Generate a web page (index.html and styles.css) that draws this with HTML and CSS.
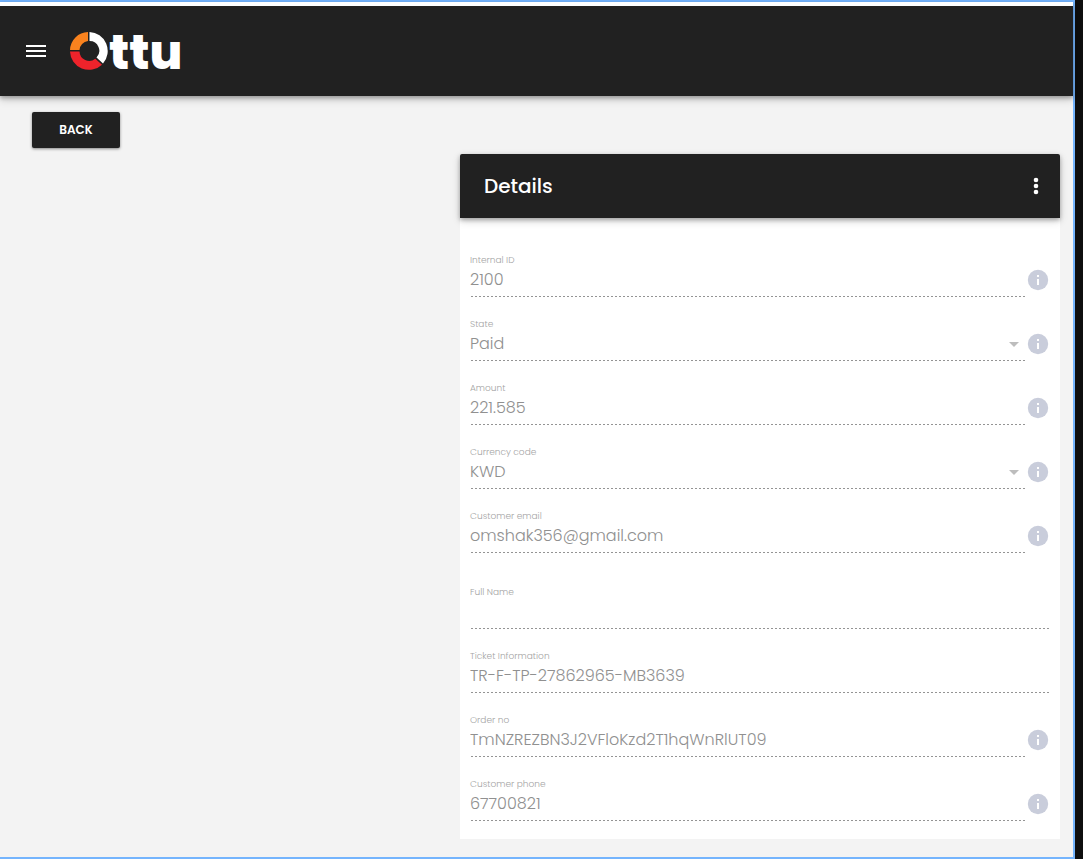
FILE: index.html
```
<!DOCTYPE html>
<html lang="en">
<head>
<meta charset="utf-8">
<meta name="viewport" content="width=device-width, initial-scale=1">
<title>Ottu – Details</title>
<link rel="stylesheet" href="styles.css">
</head>
<body>
<svg class="symbols" aria-hidden="true">
  <symbol id="info" viewBox="0 0 24 24">
    <circle cx="12" cy="12" r="10.2" fill="#c9cddb"/>
    <path d="M11 7h2v2h-2zM11 11h2v6h-2z" fill="#fff"/>
  </symbol>
  <symbol id="caret" viewBox="0 0 10 5"><path d="M0 0h10L5 5z" fill="#bdbdbd"/></symbol>
</svg>
<div class="page">
  <header class="topbar">
    <button class="menu" type="button" aria-label="Menu">
      <svg viewBox="0 0 20 14" width="20" height="14"><path d="M0 1h20v2H0zM0 6h20v2H0zM0 11h20v2H0z" fill="#fff"/></svg>
    </button>
    <a class="logo" href="#" aria-label="Ottu">
      <svg class="ring" viewBox="0 0 38 38" width="38" height="38">
        <path d="M0 18A18.5 18.5 0 0 1 18 0V9A9.5 9.5 0 0 0 9.500 18Z" fill="#f9821e"/>
        <path d="M19.500 0A19 19 0 0 1 33 31.500L26.500 25.500A9.700 9.700 0 0 0 19.500 9Z" fill="#fff"/>
        <path d="M0 19.500H9.500A9.700 9.700 0 0 0 25.300 26.700L32 32.700A19 19 0 0 1 0 19.500Z" fill="#ee232b"/>
      </svg>
      <span class="wordmark">ttu</span>
    </a>
  </header>
  <main class="content">
    <button class="back" type="button">BACK</button>
    <section class="card">
      <div class="card-head">
        <h1 class="card-title">Details</h1>
        <button class="more" type="button" aria-label="More options">
          <svg viewBox="0 0 24 24" width="24" height="24" fill="#fff"><circle cx="12" cy="6" r="2.300"/><circle cx="12" cy="12" r="2.300"/><circle cx="12" cy="18" r="2.300"/></svg>
        </button>
      </div>
      <form class="fields">
        <div class="group">
          <div class="row">
            <div class="field"><label for="id">Internal ID</label><input id="id" value="2100" disabled></div>
            <svg class="info"><use href="#info"/></svg>
          </div>
          <div class="row">
            <div class="field"><label for="state">State</label><select id="state" disabled><option>Paid</option></select><svg class="caret"><use href="#caret"/></svg></div>
            <svg class="info"><use href="#info"/></svg>
          </div>
          <div class="row">
            <div class="field"><label for="amount">Amount</label><input id="amount" value="221.585" disabled></div>
            <svg class="info"><use href="#info"/></svg>
          </div>
          <div class="row">
            <div class="field"><label for="currency">Currency code</label><select id="currency" disabled><option>KWD</option></select><svg class="caret"><use href="#caret"/></svg></div>
            <svg class="info"><use href="#info"/></svg>
          </div>
          <div class="row">
            <div class="field"><label for="email">Customer email</label><input id="email" value="omshak356@gmail.com" disabled></div>
            <svg class="info"><use href="#info"/></svg>
          </div>
        </div>
        <div class="group">
          <div class="row">
            <div class="field"><label for="name">Full Name</label><input id="name" value="" disabled></div>
          </div>
          <div class="row">
            <div class="field"><label for="ticket">Ticket Information</label><input id="ticket" value="TR-F-TP-27862965-MB3639" disabled></div>
          </div>
          <div class="row">
            <div class="field"><label for="order">Order no</label><input id="order" value="TmNZREZBN3J2VFloKzd2T1hqWnRlUT09" disabled></div>
            <svg class="info"><use href="#info"/></svg>
          </div>
          <div class="row">
            <div class="field"><label for="phone">Customer phone</label><input id="phone" value="67700821" disabled></div>
            <svg class="info"><use href="#info"/></svg>
          </div>
        </div>
      </form>
    </section>
  </main>
</div>
</body>
</html>
```
FILE: styles.css
```
* { box-sizing: border-box; }

body {
  margin: 0;
  padding-right: 8px;
  background: #0e0e0e;
  font-family: Poppins, Inter, "Open Sans", sans-serif;
}

button { font: inherit; border: 0; padding: 0; cursor: pointer; }

.symbols { position: absolute; width: 0; height: 0; }

.page {
  min-height: 100vh;
  display: flex;
  flex-direction: column;
  background: #f3f3f3;
  border: 2px solid #74b4fd;
  border-left: 0;
}

.topbar {
  display: flex;
  align-items: center;
  gap: 24px;
  height: 94px;
  padding-left: 26px;
  border-top: 4px solid #fff;
  background: #212121;
  box-shadow: 0 2px 4px rgba(0, 0, 0, .28), 0 4px 8px rgba(0, 0, 0, .16);
}

.menu { display: flex; background: none; }

.logo {
  display: flex;
  align-items: center;
  gap: 1px;
  color: #fff;
  text-decoration: none;
}

.wordmark {
  height: 48px;
  font-size: 48px;
  font-weight: 800;
  line-height: 52px;
}

.content {
  flex: 1;
  display: flex;
  flex-direction: column;
  gap: 6px;
  padding: 16px 13px 18px 32px;
}

.back {
  align-self: flex-start;
  width: 88px;
  height: 36px;
  border-radius: 2px;
  background: #212121;
  color: #fff;
  font-size: 12px;
  font-weight: 600;
  box-shadow: 0 1px 3px rgba(0, 0, 0, .45);
}

.card {
  align-self: flex-end;
  width: 100%;
  max-width: 600px;
  background: #fff;
}

.card-head {
  display: flex;
  align-items: center;
  justify-content: space-between;
  height: 64px;
  padding: 0 12px 0 24px;
  border-radius: 2px 2px 0 0;
  background: #212121;
  color: #fff;
  box-shadow: 0 2px 4px rgba(0, 0, 0, .28), 0 3px 8px rgba(0, 0, 0, .16);
}

.card-title { margin: 0; font-size: 20px; font-weight: 500; }

.more { display: flex; background: none; }

.fields {
  display: flex;
  flex-direction: column;
  gap: 12px;
  padding: 15px 10px 18px;
}

.row { display: flex; height: 64px; padding-top: 21px; }

.field {
  position: relative;
  flex: 1;
  min-width: 0;
  display: flex;
  flex-direction: column;
  background: repeating-linear-gradient(90deg, #949494 0 2px, transparent 2px 4px) 1px 100% / 100% 1px no-repeat;
}

.field label {
  color: #a4a4a4;
  font-size: 9px;
  line-height: 12px;
  font-weight: 300;
}

.field input,
.field select {
  appearance: none;
  width: 100%;
  height: 26px;
  margin: 0;
  padding: 0;
  border: 0;
  background: none;
  color: #909090;
  opacity: 1;
  font-family: inherit;
  font-size: 16px;
  font-weight: 300;
}

.caret { position: absolute; right: 7px; top: 24px; width: 10px; height: 5px; }

.info { flex: none; width: 24px; height: 24px; margin-top: 14px; }
```
